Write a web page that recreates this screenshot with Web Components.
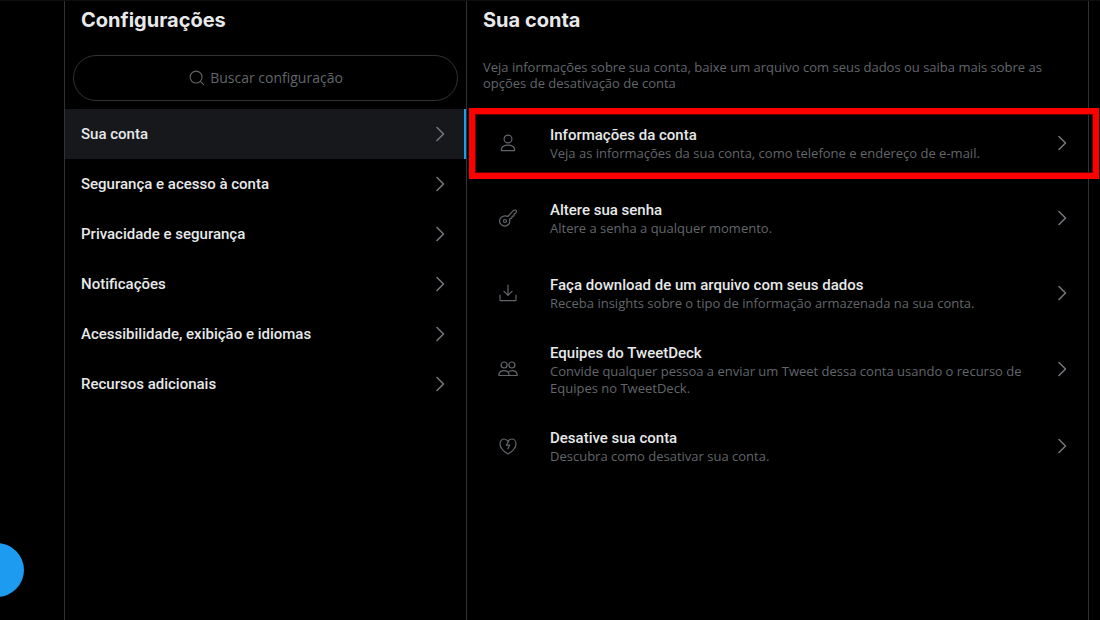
<!DOCTYPE html>
<html lang="pt-BR">
<head>
<meta charset="utf-8">
<title>Configurações</title>
<style>
  :root {
    --line: #2f3336;
    --text: #e7e9ea;
    --muted: #62666b;
    --accent: #1d9bf0;
    --active: #16181c;
    --heading-font: "Inter", "Liberation Sans", sans-serif;
    --label-font: "Roboto", "Liberation Sans", sans-serif;
    --note-font: "Open Sans", "Noto Sans", sans-serif;
  }
  html { background: #000; }
  body { margin: 0; font-family: var(--note-font); color: var(--text); }
</style>
</head>
<body>
<settings-app></settings-app>

<script>
const ICONS = {
  chevron: '<path d="M7 3.5 13.5 10 7 16.500" stroke-width="1.6"/>',
  search: '<circle cx="9" cy="9" r="6.6"/><path d="m13.800 13.800 3.500 3.500"/>',
  person: '<circle cx="10" cy="6" r="3.9"/><path d="M4 17.7h12c.6 0 .8-.4.7-1-.5-2.9-3.1-4.500-6.700-4.500s-6.200 1.600-6.700 4.500c-.1.600.1 1 .7 1z"/>',
  key: '<circle cx="7" cy="13" r="1.500"/><path d="M9.900 8.500 14.800 3.200C15.900 2 17.500 1.700 18 2.100c.5.5.3 2.100-.4 3.200l-1.300.6-.3 1.900-1.900.5-.3 1.800-1.800.5-.4 1.200c.6 2.200-.4 4.500-2.400 5.600-2 1-4.500.7-6.100-1-1.600-1.700-1.900-4.200-.7-6.100C3.900 8.100 7.200 7.100 9.900 8.500z"/>',
  download: '<path d="M10 2v10M6 8.300l4 4 4-4M2 12v4.800c0 .6.3.9.9.9h14.200c.6 0 .9-.3.9-.9V12"/>',
  people: '<circle cx="6.100" cy="6" r="3"/><circle cx="13.900" cy="6" r="3"/><path d="M1.300 16.500h9.300c.5 0 .6-.3.5-.8-.4-2.500-2.100-4-4.900-4s-4.900 1.500-5.400 4c-.1.5 0 .8.5.8zM10.600 16.500h8.100c.5 0 .6-.3.5-.8-.5-2.500-2.200-4-5-4-1.700 0-3 .5-3.900 1.500"/>',
  heart: '<path d="M10 17.900C5.200 15.200 2 11.700 2 7.700 2 4.900 3.900 3 6.200 3 8 3 9.200 4.100 10 5.300 10.800 4.100 12 3 13.800 3 16.100 3 18 4.900 18 7.700c0 4-3.200 7.500-8 10.200z"/><path d="M10.500 5.500 8.300 9.200h3.400l-1.900 3.600"/>'
};

function mount(host, html) {
  const tpl = document.createElement('template');
  tpl.innerHTML = html;
  const root = host.attachShadow({ mode: 'open' });
  root.append(tpl.content.cloneNode(true));
  return root;
}

customElements.define('ui-icon', class extends HTMLElement {
  connectedCallback() {
    if (this.shadowRoot) return;
    mount(this, `<style>
      :host { display: block; flex: none; width: 20px; height: 20px; color: #71767b; }
      svg { display: block; width: 100%; height: 100%; fill: none; stroke: currentColor;
            stroke-width: 1.2; stroke-linecap: round; stroke-linejoin: round; }
    </style><svg viewBox="0 0 20 20" aria-hidden="true">${ICONS[this.getAttribute('name')]}</svg>`);
  }
});

customElements.define('compose-rail', class extends HTMLElement {
  connectedCallback() {
    if (this.shadowRoot) return;
    mount(this, `<style>
      :host { display: flex; flex-direction: column; justify-content: flex-end; align-items: flex-start; overflow: hidden; }
      button { width: 54px; height: 54px; margin: 0 0 23px -30px; padding: 0; border: 0; border-radius: 50%; background: var(--accent); }
    </style><button type="button" aria-label="Tweetar"></button>`);
  }
});

customElements.define('settings-panel', class extends HTMLElement {
  connectedCallback() {
    if (this.shadowRoot) return;
    mount(this, `<style>
      :host { display: block; border-left: 1px solid var(--line); min-width: 0; }
      h2 { margin: 0; padding: 7px 16px 0; font: 700 20px/24px var(--heading-font); }
    </style><h2><slot name="title"></slot></h2><slot></slot>`);
  }
});

customElements.define('search-box', class extends HTMLElement {
  connectedCallback() {
    if (this.shadowRoot) return;
    mount(this, `<style>
      :host { display: block; padding: 23px 8px 8px; }
      label { display: flex; align-items: center; justify-content: center; gap: 4px; height: 44px;
              border: 1px solid var(--line); border-radius: 23px; color: var(--muted); }
      ui-icon { width: 18px; height: 18px; color: var(--muted); }
      input { field-sizing: content; padding: 0; border: 0; outline: 0; background: none;
              font: 400 14px/20px var(--note-font); color: var(--text); }
      input::placeholder { color: var(--muted); opacity: 1; }
    </style><label><ui-icon name="search"></ui-icon><input type="search" placeholder="Buscar configuração" aria-label="Buscar configuração"></label>`);
  }
});

customElements.define('nav-row', class extends HTMLElement {
  connectedCallback() {
    if (this.shadowRoot) return;
    mount(this, `<style>
      :host { display: block; }
      a { display: flex; align-items: center; justify-content: space-between; height: 50px; padding: 0 16px;
          font: 500 15px/20px var(--label-font); color: inherit; text-decoration: none; }
      :host([active]) a { background: var(--active); box-shadow: inset -2px 0 var(--accent); }
    </style><a href="#"><slot></slot><ui-icon name="chevron"></ui-icon></a>`);
  }
});

customElements.define('option-row', class extends HTMLElement {
  connectedCallback() {
    if (this.shadowRoot) return;
    mount(this, `<style>
      :host { display: block; position: relative; }
      a { display: flex; align-items: center; min-height: 75px; padding: 0 16px 0 31px; box-sizing: border-box;
          color: inherit; text-decoration: none; }
      .lead { color: var(--muted); }
      .text { flex: 1; min-width: 0; padding: 13px 24px 11px 32px; }
      .name { font: 500 15px/20px var(--label-font); }
      .note { font: 400 13px/17px var(--note-font); color: var(--muted); }
      :host([marked])::after { content: ""; position: absolute; inset: 3px -11px 1px 2px; pointer-events: none;
          border: 6px solid #f00; box-shadow: inset 0 0 0 1px #600000; }
    </style><a href="#"><ui-icon class="lead" name="${this.getAttribute('icon')}"></ui-icon>
      <div class="text"><div class="name"><slot name="name"></slot></div><div class="note"><slot></slot></div></div>
      <ui-icon name="chevron"></ui-icon></a>`);
  }
});

customElements.define('settings-app', class extends HTMLElement {
  connectedCallback() {
    if (this.shadowRoot) return;
    mount(this, `<style>
      :host { display: grid; grid-template-columns: 64px 402fr 622fr 12px; box-sizing: border-box; min-height: 100vh;
              border-top: 1px solid #0e0f10; overflow: hidden; background: #000; }
      nav { display: block; }
      .end { border-left: 1px solid var(--line); }
      p { margin: 0; padding: 27px 16px 14px; font: 400 13px/16px var(--note-font); color: var(--muted); }
    </style>
    <compose-rail></compose-rail>
    <settings-panel>
      <span slot="title">Configurações</span>
      <search-box></search-box>
      <nav aria-label="Configurações">
        <nav-row active>Sua conta</nav-row>
        <nav-row>Segurança e acesso à conta</nav-row>
        <nav-row>Privacidade e segurança</nav-row>
        <nav-row>Notificações</nav-row>
        <nav-row>Acessibilidade, exibição e idiomas</nav-row>
        <nav-row>Recursos adicionais</nav-row>
      </nav>
    </settings-panel>
    <settings-panel>
      <span slot="title">Sua conta</span>
      <p>Veja informações sobre sua conta, baixe um arquivo com seus dados ou saiba mais sobre as opções de desativação de conta</p>
      <option-row icon="person" marked><span slot="name">Informações da conta</span>Veja as informações da sua conta, como telefone e endereço de e-mail.</option-row>
      <option-row icon="key"><span slot="name">Altere sua senha</span>Altere a senha a qualquer momento.</option-row>
      <option-row icon="download"><span slot="name">Faça download de um arquivo com seus dados</span>Receba insights sobre o tipo de informação armazenada na sua conta.</option-row>
      <option-row icon="people"><span slot="name">Equipes do TweetDeck</span>Convide qualquer pessoa a enviar um Tweet dessa conta usando o recurso de Equipes no TweetDeck.</option-row>
      <option-row icon="heart"><span slot="name">Desative sua conta</span>Descubra como desativar sua conta.</option-row>
    </settings-panel>
    <div class="end"></div>`);
  }
});
</script>
</body>
</html>
